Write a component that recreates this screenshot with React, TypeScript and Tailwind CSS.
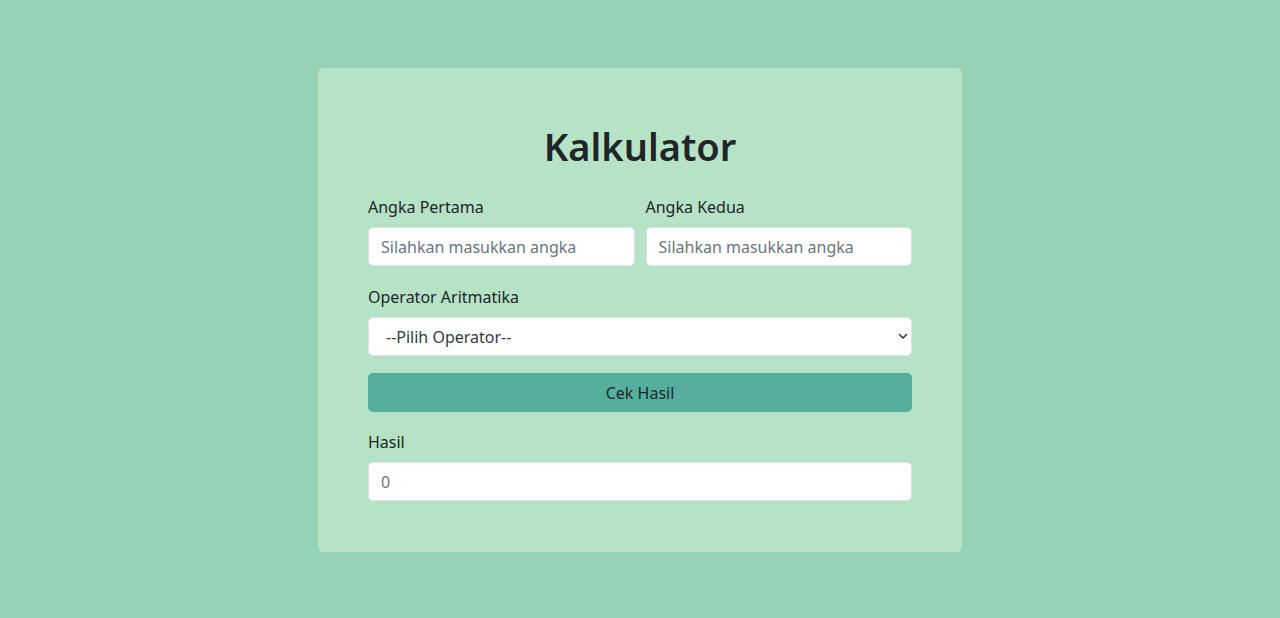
export default function App() {
  const font = { fontFamily: '"Noto Sans", "Segoe UI", sans-serif' }
  return (
    <div style={font} className="min-h-screen w-full bg-[#96d3b5] flex justify-center pt-[68px] text-[#212529]">
      <div className="w-[644px] h-[484px] bg-[#b6e2c5] rounded-[5px] px-[50px] pt-[50px]">
        <h1 className="text-[38px] leading-[48px] font-semibold text-center mt-[4px] mb-[25px]">Kalkulator</h1>
        <div className="flex gap-[11px]">
          <div className="flex-1">
            <label className="block text-[16px] leading-[24px] mb-[8px]">Angka Pertama</label>
            <input
              className="w-full h-[39px] bg-white rounded-[5px] border border-[#dee2e6] px-[12px] text-[16px] outline-none placeholder:text-[#6c757d]"
              placeholder="Silahkan masukkan angka"
            />
          </div>
          <div className="flex-1">
            <label className="block text-[16px] leading-[24px] mb-[8px]">Angka Kedua</label>
            <input
              className="w-full h-[39px] bg-white rounded-[5px] border border-[#dee2e6] px-[12px] text-[16px] outline-none placeholder:text-[#6c757d]"
              placeholder="Silahkan masukkan angka"
            />
          </div>
        </div>
        <label className="block text-[16px] leading-[24px] mt-[19px] mb-[8px]">Operator Aritmatika</label>
        <div className="relative h-[39px] bg-white rounded-[5px] border border-[#dee2e6] flex items-center pl-[17px] text-[16px] text-[#343a40]">
          <span>--Pilih Operator--</span>
          <svg className="absolute right-[3px] top-[14px]" width="10" height="8" viewBox="0 0 10 8" fill="none">
            <path d="M1.5 2.5 L5 6 L8.5 2.5" stroke="#343a40" strokeWidth="1.6" strokeLinecap="round" strokeLinejoin="round" />
          </svg>
        </div>
        <button className="w-full h-[39px] bg-[#56af9c] rounded-[5px] mt-[17px] text-[16px] text-[#212529]">Cek Hasil</button>
        <label className="block text-[16px] leading-[24px] mt-[18px] mb-[8px]">Hasil</label>
        <input
          className="w-full h-[39px] bg-white rounded-[5px] border border-[#dee2e6] px-[12px] text-[16px] outline-none placeholder:text-[#6c757d]"
          placeholder="0"
        />
      </div>
    </div>
  )
}
